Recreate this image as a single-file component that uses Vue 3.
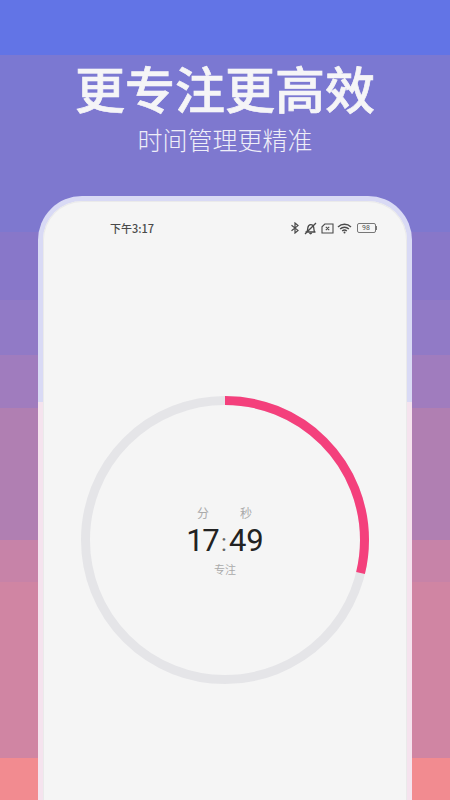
<script setup>
const radius = 139.5
const circumference = 2 * Math.PI * radius
const progress = 0.288
const dash = `${circumference * progress} ${circumference}`
</script>

<template>
  <main class="page">
    <header class="hero">
      <h1 class="title">更专注更高效</h1>
      <p class="subtitle">时间管理更精准</p>
    </header>
    <section class="phone">
      <div class="screen">
        <div class="status">
          <span class="clock">下午3:17</span>
          <div class="icons">
            <svg class="ic" width="10" height="12" viewBox="0 0 10 12" fill="none" stroke="#4a4a4a" stroke-width="1.2">
              <path d="M1.5 3.2 8 8.400 5 11V1l3 2.600-6.500 5.200" />
            </svg>
            <svg class="ic" width="15" height="13" viewBox="0 0 15 13" fill="none" stroke="#4a4a4a" stroke-width="1.3">
              <path d="M2.500 10h10M3.800 9.800c1-1 .8-2.600 1-4C5.200 3.600 6.500 2.600 7.800 2.600s2.600 1 2.900 2.700c.2 1.600.1 3.400 1 4.500M6.500 11.200c.5.7 1.700.7 2.200 0M2 12 13 1" />
            </svg>
            <svg class="ic" width="13" height="11" viewBox="0 0 13 11" fill="none" stroke="#4a4a4a" stroke-width="1.100">
              <path d="M3.800 1H12v9H1V3.800zM4.800 3.900l3.400 3.300M8.200 3.900 4.800 7.200" />
            </svg>
            <svg class="ic" width="15" height="11" viewBox="0 0 15 11" fill="none" stroke="#4a4a4a" stroke-width="1.400">
              <path d="M1 3.900C4.700.4 10.300.4 14 3.900M3.100 6C5.600 3.700 9.400 3.700 11.900 6M5.200 8C6.500 6.900 8.500 6.900 9.800 8" />
              <circle cx="7.500" cy="9.500" r="1" fill="#4a4a4a" stroke="none" />
            </svg>
            <div class="battery">
              <span class="battery-body">98</span>
              <span class="battery-cap"></span>
            </div>
          </div>
        </div>
        <div class="timer">
          <svg class="ring" width="288" height="288" viewBox="0 0 288 288">
            <circle cx="144" cy="144" :r="radius" fill="none" stroke="#E5E5E8" stroke-width="9" />
            <circle
              cx="144"
              cy="144"
              :r="radius"
              fill="none"
              stroke="#F4407C"
              stroke-width="9"
              :stroke-dasharray="dash"
              transform="rotate(-90 144 144)"
            />
          </svg>
          <div class="readout">
            <div class="units"><span>分</span><span>秒</span></div>
            <div class="time"><span class="mins">17</span><span class="colon">:</span><span>49</span></div>
            <div class="mode">专注</div>
          </div>
        </div>
      </div>
    </section>
  </main>
</template>

<style>
html,
body {
  margin: 0;
  overflow: hidden;
}
</style>

<style scoped>
.page {
  width: 450px;
  height: 800px;
  overflow: hidden;
  box-sizing: border-box;
  padding-top: 57px;
  font-family: "Noto Sans CJK SC", "Noto Sans", sans-serif;
  background: linear-gradient(
    to bottom,
    #6274e6 0 55px,
    #7b78d2 55px 110px,
    #7e78cf 110px 232px,
    #8877c9 232px 300px,
    #917ac6 300px 355px,
    #a07cbe 355px 408px,
    #b07fb2 408px 540px,
    #c783a8 540px 582px,
    #d085a3 582px 758px,
    #f28b90 758px 800px
  );
}
.hero {
  text-align: center;
  color: #f5f5f7;
}
.title {
  margin: 0;
  font-size: 50px;
  line-height: 60px;
  font-weight: 500;
  -webkit-text-stroke: 0.7px #f5f5f7;
}
.subtitle {
  margin: 5px 0 0;
  font-size: 25px;
  line-height: 34px;
  font-weight: 300;
  color: #eeeef8;
}
.phone {
  width: 374px;
  height: 700px;
  margin: 40px auto 0;
  box-sizing: border-box;
  padding: 5px 5px 0;
  border-radius: 44px 44px 0 0;
  background: linear-gradient(to bottom, #d9daf5 0 206px, #f5e3ee 206px 100%);
}
.screen {
  height: 100%;
  box-sizing: border-box;
  padding: 19px 30px 0 67px;
  border-radius: 39px 39px 0 0;
  background: #f5f5f5;
  box-shadow: inset 0 0 0 1px #eaeaea;
}
.status {
  display: flex;
  align-items: center;
  justify-content: space-between;
  height: 16px;
}
.clock {
  font-size: 11px;
  line-height: 16px;
  font-weight: 500;
  color: #4a4a4a;
}
.icons {
  display: flex;
  align-items: center;
  gap: 3px;
}
.ic {
  display: block;
}
.battery {
  display: flex;
  align-items: center;
  margin-left: 2px;
}
.battery-body {
  width: 17px;
  height: 8px;
  border: 1px solid #777;
  border-radius: 2px;
  font-family: "Roboto", sans-serif;
  font-size: 7px;
  line-height: 8px;
  text-align: center;
  color: #555;
}
.battery-cap {
  width: 1.500px;
  height: 4px;
  background: #777;
}
.timer {
  display: grid;
  place-items: center;
  width: 288px;
  height: 288px;
  margin: 160px 0 0 -29px;
}
.ring,
.readout {
  grid-area: 1 / 1;
}
.readout {
  display: flex;
  flex-direction: column;
  align-items: center;
  margin-top: -1px;
}
.units {
  display: flex;
  gap: 31px;
  margin-right: 1px;
  font-size: 12px;
  line-height: 18px;
  color: #aaa;
}
.time {
  display: flex;
  align-items: baseline;
  font-family: "Roboto", sans-serif;
  font-size: 31px;
  line-height: 38px;
  font-weight: 400;
  color: #222;
}
.mins {
  letter-spacing: -1.500px;
}
.colon {
  margin: 0 2px 0 3px;
  font-size: 24px;
  color: #666;
}
.mode {
  font-size: 11px;
  line-height: 14px;
  color: #aaa;
}
</style>
